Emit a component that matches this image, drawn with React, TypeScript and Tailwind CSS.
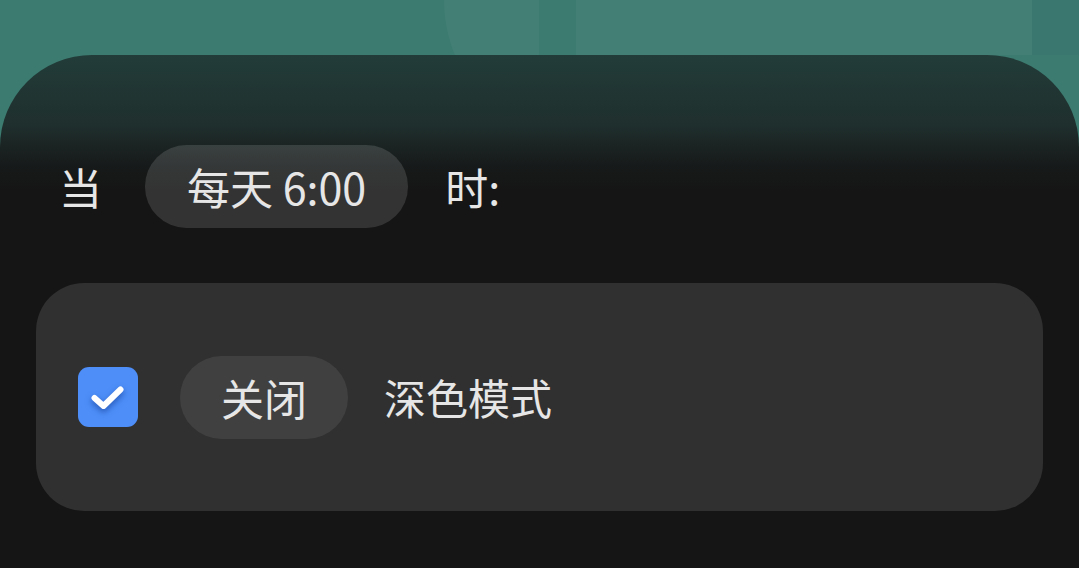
import React from 'react';

const font = { fontFamily: '"Noto Sans CJK SC", "Noto Sans", sans-serif' };

const Check = () => (
  <div className="w-[60px] h-[60px] rounded-[11px] bg-[#4d8ef8] shrink-0">
    <svg
      width="60"
      height="60"
      viewBox="0 0 60 60"
      fill="none"
      className="drop-shadow-[0_3px_3px_rgba(25,70,160,0.75)]"
    >
      <path
        d="M16.5 31 L25.5 39 L42.5 22.5"
        stroke="#ffffff"
        strokeWidth="6"
        strokeLinecap="round"
        strokeLinejoin="round"
      />
    </svg>
  </div>
);

const App: React.FC = () => {
  return (
    <div
      className="w-[1079px] h-[568px] overflow-hidden bg-[#3b7b70] flex flex-col text-[#e6e6e6]"
      style={font}
    >
      {/* blurred cards peeking above the sheet */}
      <div className="h-[55px] shrink-0 flex overflow-hidden">
        <div className="w-[444px] shrink-0" />
        <div className="w-[95px] h-[118px] shrink-0 bg-[#447f75] rounded-bl-[95px_118px]" />
        <div className="w-[37px] shrink-0" />
        <div className="w-[456px] h-[118px] shrink-0 bg-[#437f74]" />
        <div className="flex-1 bg-[#3a776e]" />
      </div>

      {/* bottom sheet */}
      <div className="flex-1 rounded-t-[92px] bg-[linear-gradient(180deg,#223c39_0px,#1f2f2d_70px,#171a1a_110px,#151515_135px)] flex flex-col">
        <div className="flex items-center pt-[90px] pl-[59px]">
          <span className="text-[43px] leading-none">当</span>
          <div className="ml-[43px] h-[83px] px-[42px] rounded-full bg-white/[0.13] flex items-center">
            <span className="text-[43px] leading-none">每天 6:00</span>
          </div>
          <span className="ml-[37px] text-[43px] leading-none">时:</span>
        </div>

        <div className="mt-[55px] mx-[36px] h-[228px] rounded-[48px] bg-[#303030] flex items-center pl-[42px]">
          <Check />
          <div className="ml-[42px] h-[83px] px-[41px] rounded-full bg-[#404040] flex items-center">
            <span className="text-[43px] leading-none">关闭</span>
          </div>
          <span className="ml-[36px] text-[42px] leading-none">深色模式</span>
        </div>
      </div>
    </div>
  );
};

export default App;
